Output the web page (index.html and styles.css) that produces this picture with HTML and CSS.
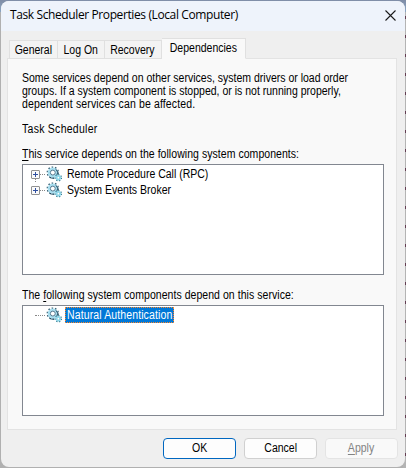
FILE: index.html
```html
<!DOCTYPE html>
<html lang="en">
<head>
<meta charset="utf-8">
<title>Task Scheduler Properties (Local Computer)</title>
<link rel="stylesheet" href="styles.css">
</head>
<body>
<svg class="defs" aria-hidden="true">
  <symbol id="gears" viewBox="0 0 17 17">
    <circle cx="6.7" cy="7" r="5.6" fill="none" stroke="#3c6478" stroke-width="2" stroke-dasharray="1.6 1.9"/>
    <circle cx="6.7" cy="7" r="4.1" fill="#fff" stroke="#a9dff0" stroke-width="2.8"/>
    <circle cx="6.7" cy="7" r="2.6" fill="#fff" stroke="#4a7088" stroke-width="1"/>
    <path d="M10 3.5a5 5 0 0 1 1 6.5M3 11.5a6 6 0 0 0 5 1.5" fill="none" stroke="#234a60" stroke-width="1"/>
    <circle cx="12.6" cy="12.4" r="3.1" fill="none" stroke="#3b8096" stroke-width="1.8" stroke-dasharray="1.3 1.5"/>
    <circle cx="12.6" cy="12.4" r="1.9" fill="#fff" stroke="#8fd6e8" stroke-width="2"/>
  </symbol>
  <symbol id="plus" viewBox="0 0 9 9">
    <rect x=".5" y=".5" width="8" height="8" rx=".5" fill="#fafafa" stroke="#919191"/>
    <path d="M2 4.5h5M4.5 2v5" stroke="#3050a0"/>
  </symbol>
</svg>
<div class="window">
  <header class="titlebar">
    <h1 class="title">Task Scheduler Properties (Local Computer)</h1>
    <svg class="close" viewBox="0 0 11 11"><path d="M.5.5l10 10M10.5.5l-10 10" fill="none" stroke="#1a1a1a" stroke-width="1.1"/></svg>
  </header>
  <nav class="tabs">
    <div class="tab general"><span>General</span></div>
    <div class="tab logon"><span>Log On</span></div>
    <div class="tab recovery"><span>Recovery</span></div>
    <div class="tab active"><span>Dependencies</span></div>
  </nav>
  <main class="panel">
    <p class="intro">Some services depend on other services, system drivers or load order<br>groups. If a system component is stopped, or is not running properly,<br><span class="last">dependent services can be affected.</span></p>
    <p class="name">Task Scheduler</p>
    <p class="label first"><u>T</u>his service depends on the following system components:</p>
    <div class="list">
      <div class="row linked"><svg class="plus"><use href="#plus"/></svg><i class="dots"></i><svg class="gears"><use href="#gears"/></svg><div class="item"><span>Remote Procedure Call (RPC)</span></div></div>
      <div class="row"><svg class="plus"><use href="#plus"/></svg><i class="dots"></i><svg class="gears"><use href="#gears"/></svg><div class="item"><span>System Events Broker</span></div></div>
    </div>
    <p class="label second">The <u>f</u>ollowing system components depend on this service:</p>
    <div class="list">
      <div class="row leaf"><i class="dots"></i><svg class="gears"><use href="#gears"/></svg><div class="item selected"><span>Natural Authentication</span></div></div>
    </div>
  </main>
  <footer class="buttons">
    <button class="ok"><span>OK</span></button>
    <button><span>Cancel</span></button>
    <button class="disabled" disabled><span><u>A</u>pply</span></button>
  </footer>
</div>
</body>
</html>
```
FILE: styles.css
```css
* { box-sizing: border-box; }
body {
  margin: 0;
  width: 406px;
  height: 468px;
  padding: 1px;
  overflow: hidden;
  background:
    linear-gradient(#7f8da7 0, #8ba5c2 12px, transparent 12px),
    linear-gradient(90deg, #b0b0b0 403px, transparent 403px),
    repeating-linear-gradient(#b4b4b4 0 16px, #633d52 16px 19px);
  font: 12px/13px "Liberation Sans", Arial, sans-serif;
  color: #000;
}
p, h1 { margin: 0; white-space: nowrap; }
p, .item span { transform: scaleX(.876); transform-origin: 0 0; }
u { text-underline-offset: 2px; text-decoration-thickness: 1px; text-decoration-skip-ink: none; }
.defs { position: absolute; width: 0; height: 0; }
.window {
  width: 404px;
  height: 466px;
  background: #efefef;
  border-radius: 8px;
  overflow: hidden;
}
.titlebar {
  display: flex;
  justify-content: space-between;
  height: 30px;
  padding: 7px 9px 0 9px;
  background: #eef3fb;
}
.title { font: 12px/14px "Open Sans", "Noto Sans", sans-serif; letter-spacing: -.39px; }
.close { width: 11px; height: 11px; margin-top: 2px; }
.tabs { display: flex; align-items: flex-end; height: 28px; padding-left: 8px; margin-bottom: -1px; }
.tab {
  display: flex;
  justify-content: center;
  height: 19px;
  padding: 3px 1px 0 0;
  border: 1px solid #e0e0e0;
  border-left: 0;
  background: #f3f3f3;
  white-space: nowrap;
}
.tab span, button span { display: inline-block; transform: scaleX(.876); }
.general { width: 49px; border-left: 1px solid #e0e0e0; }
.logon { width: 47px; }
.recovery { width: 57px; }
.active {
  width: 84px;
  height: 21px;
  background: #f9f9f9;
  border-bottom-color: #f9f9f9;
  z-index: 1;
}
.panel {
  width: 390px;
  height: 372px;
  margin-left: 6px;
  padding: 13px 12px 0 14px;
  border: 1px solid #e3e3e3;
  background: #f9f9f9;
}
.last { letter-spacing: .15px; }
.name { margin-top: 12px; letter-spacing: .3px; }
.label { line-height: 14px; letter-spacing: .05px; }
.first { margin-top: 11px; }
.second { margin-top: 13px; }
.list {
  width: 362px;
  height: 111px;
  margin-top: 3px;
  padding: 1px 8px;
  background: #fff;
  border: 1px solid #828790;
}
.row { display: flex; align-items: center; height: 16px; }
.plus { width: 9px; height: 9px; }
.linked { background: linear-gradient(#888, #888) 4px 13px / 1px 1px no-repeat, linear-gradient(#888, #888) 4px 15px / 1px 1px no-repeat; }
.dots { width: 5px; border-top: 1px dotted #888; margin-right: 1px; }
.leaf .dots { width: 10px; margin-left: 4px; }
.gears { width: 17px; height: 16px; }
.item { height: 16px; margin-left: 2px; padding: 1px 2px; line-height: 14px; white-space: nowrap; }
.item span { display: block; }
.selected { width: 109px; background: #0078d7; color: #fff; outline: 1px dotted #ff8728; outline-offset: -1px; letter-spacing: .13px; }
.buttons { display: flex; gap: 8px; margin: 8px 0 0 162px; }
button {
  width: 73px;
  height: 21px;
  padding: 0;
  border: 1px solid #d0d0d0;
  border-radius: 4px;
  background: #fdfdfd;
  font: inherit;
  color: #000;
}
.ok { border-color: #0067c0; }
.disabled { color: #838383; border-color: #e4e4e4; background: #f9f9f9; }
```
